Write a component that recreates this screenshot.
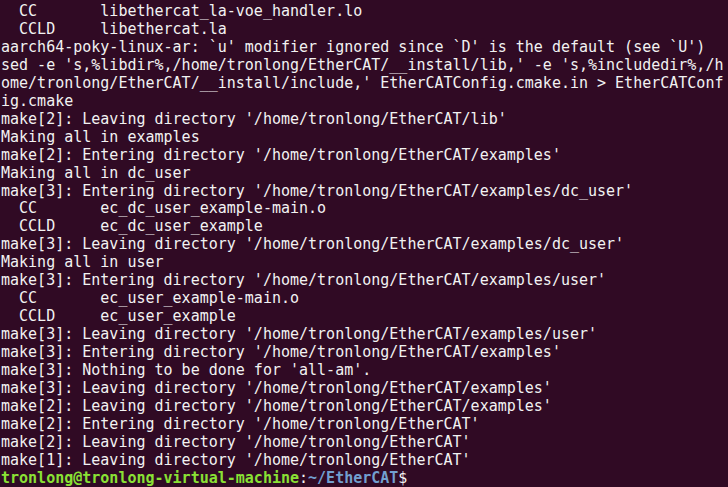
const lines = [
  "  CC       libethercat_la-voe_handler.lo",
  "  CCLD     libethercat.la",
  "aarch64-poky-linux-ar: `u' modifier ignored since `D' is the default (see `U')",
  "sed -e 's,%libdir%,/home/tronlong/EtherCAT/__install/lib,' -e 's,%includedir%,/h",
  "ome/tronlong/EtherCAT/__install/include,' EtherCATConfig.cmake.in > EtherCATConf",
  "ig.cmake",
  "make[2]: Leaving directory '/home/tronlong/EtherCAT/lib'",
  "Making all in examples",
  "make[2]: Entering directory '/home/tronlong/EtherCAT/examples'",
  "Making all in dc_user",
  "make[3]: Entering directory '/home/tronlong/EtherCAT/examples/dc_user'",
  "  CC       ec_dc_user_example-main.o",
  "  CCLD     ec_dc_user_example",
  "make[3]: Leaving directory '/home/tronlong/EtherCAT/examples/dc_user'",
  "Making all in user",
  "make[3]: Entering directory '/home/tronlong/EtherCAT/examples/user'",
  "  CC       ec_user_example-main.o",
  "  CCLD     ec_user_example",
  "make[3]: Leaving directory '/home/tronlong/EtherCAT/examples/user'",
  "make[3]: Entering directory '/home/tronlong/EtherCAT/examples'",
  "make[3]: Nothing to be done for 'all-am'.",
  "make[3]: Leaving directory '/home/tronlong/EtherCAT/examples'",
  "make[2]: Leaving directory '/home/tronlong/EtherCAT/examples'",
  "make[2]: Entering directory '/home/tronlong/EtherCAT'",
  "make[2]: Leaving directory '/home/tronlong/EtherCAT'",
  "make[1]: Leaving directory '/home/tronlong/EtherCAT'",
];

export default function App() {
  return (
    <div className="w-[728px] h-[487px] overflow-hidden bg-[#300a24] text-[#f2f2f2] font-['DejaVu_Sans_Mono',monospace] text-[15px] leading-[17.95px] pt-[3px] pl-[1px]">
      {lines.map((l, i) => (
        <div key={i} className="whitespace-pre">
          {l}
        </div>
      ))}
      <div className="whitespace-pre">
        <span className="font-bold text-[#8ae234]">tronlong@tronlong-virtual-machine</span>
        <span>:</span>
        <span className="font-bold text-[#729fcf]">~/EtherCAT</span>
        <span>$</span>
      </div>
    </div>
  );
}
